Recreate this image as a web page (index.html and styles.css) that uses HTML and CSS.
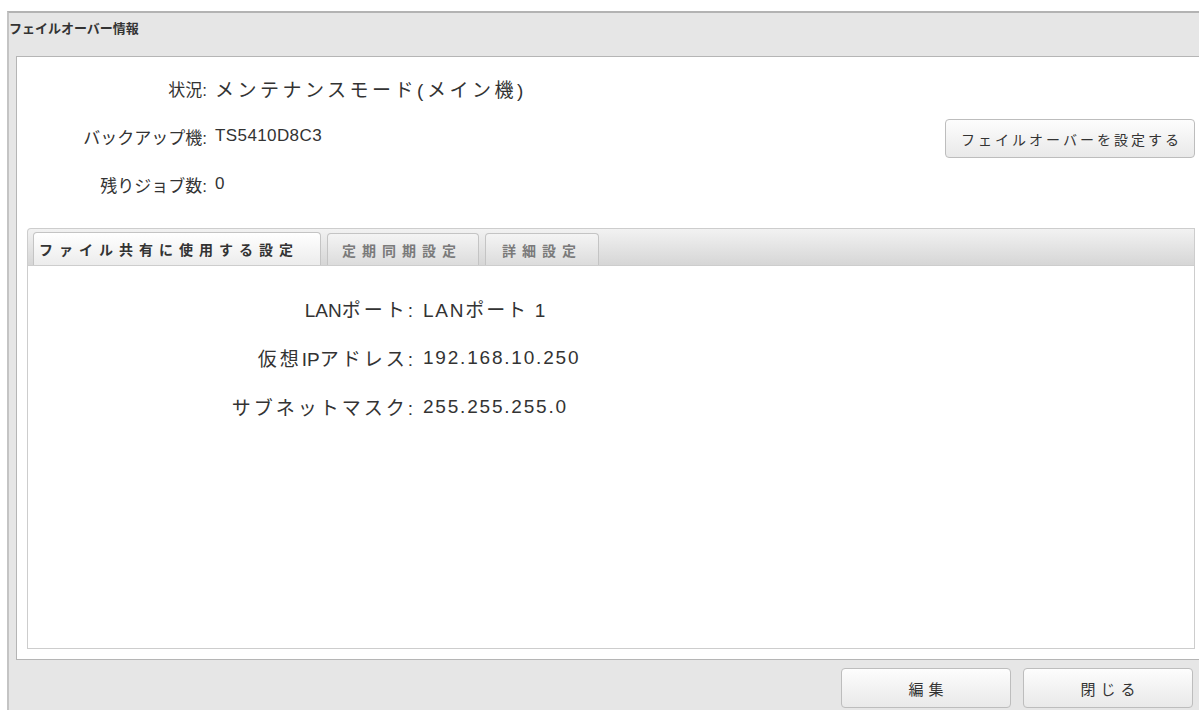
FILE: index.html
```html
<!DOCTYPE html>
<html lang="ja">
<head>
<meta charset="utf-8">
<title>フェイルオーバー情報</title>
<link rel="stylesheet" href="styles.css">
</head>
<body>
<div class="panel">
  <div class="panel-title">フェイルオーバー情報</div>
  <div class="panel-body">
    <div class="summary">
      <span class="label">状況:</span>
      <span class="value value-jp">メンテナンスモード(メイン機)</span>
      <span></span>
      <span class="label">バックアップ機:</span>
      <span class="value">TS5410D8C3</span>
      <button class="btn btn-failover">フェイルオーバーを設定する</button>
      <span class="label">残りジョブ数:</span>
      <span class="value">0</span>
      <span></span>
    </div>
    <div class="tabs">
      <div class="tab-bar">
        <div class="tab tab-1 active">ファイル共有に使用する設定</div>
        <div class="tab tab-2">定期同期設定</div>
        <div class="tab tab-3">詳細設定</div>
      </div>
      <div class="tab-panel">
        <div class="details">
          <span class="label"><span class="en">LAN</span>ポート:</span>
          <span class="value">LANポート 1</span>
          <span class="label">仮想<span class="en">IP</span>アドレス:</span>
          <span class="value">192.168.10.250</span>
          <span class="label">サブネットマスク:</span>
          <span class="value">255.255.255.0</span>
        </div>
      </div>
    </div>
  </div>
  <div class="panel-footer">
    <button class="btn btn-footer">編集</button>
    <button class="btn btn-footer">閉じる</button>
  </div>
</div>
</body>
</html>
```

FILE: styles.css
```css
html, body {
  margin: 0;
  padding: 0;
  background: #ffffff;
  overflow: hidden;
}

body {
  font-family: "Liberation Sans", "Noto Sans CJK JP", sans-serif;
  color: #333333;
  height: 710px;
}

.panel {
  margin: 11px 0 0 7px;
  width: 1190px;
  height: 720px;
  background: #e6e6e6;
  border-top: 2px solid #b3b3b3;
  border-left: 2px solid #c4c4c4;
  display: flex;
  flex-direction: column;
}

.panel-title {
  height: 30px;
  line-height: 30px;
  margin-bottom: 13px;
  font-family: "Noto Sans CJK JP", sans-serif;
  font-size: 13px;
  font-weight: bold;
  color: #333;
}

.panel-body {
  margin-left: 7px;
  background: #ffffff;
  border-top: 1px solid #b5b5b5;
  border-left: 1px solid #b5b5b5;
  border-bottom: 1px solid #b5b5b5;
  padding: 7px 4px 10px 10px;
}

.summary {
  display: grid;
  grid-template-columns: 190px auto 1fr;
  grid-auto-rows: 48px;
  column-gap: 8px;
  align-items: center;
  margin-left: -10px;
  font-size: 17px;
  letter-spacing: 0.4px;
}

.label {
  text-align: right;
  justify-self: end;
  white-space: nowrap;
}

.summary .label {
  letter-spacing: 0;
}

.value {
  white-space: nowrap;
}

.value-jp {
  font-size: 19px;
  letter-spacing: 3.5px;
}

.btn {
  font-family: "Noto Sans CJK JP", sans-serif;
  color: #333;
  background: linear-gradient(#fdfdfd, #e9e9e9);
  border: 1px solid #bdbdbd;
  border-radius: 4px;
  padding: 0;
  cursor: pointer;
}

.btn-failover {
  justify-self: end;
  width: 250px;
  height: 39px;
  font-size: 14px;
  letter-spacing: 3px;
  padding-left: 3px;
  margin-top: 5px;
}

.tabs {
  margin-top: 20px;
}

.tab-bar {
  display: flex;
  align-items: flex-end;
  gap: 6px;
  height: 36px;
  padding-left: 5px;
  background: linear-gradient(#f2f2f2, #d6d6d6);
  border: 1px solid #cdcdcd;
  border-bottom: none;
  border-radius: 4px 0 0 0;
}

.tab {
  height: 32px;
  line-height: 32px;
  box-sizing: border-box;
  font-family: "Noto Sans CJK JP", sans-serif;
  font-size: 14px;
  font-weight: bold;
  letter-spacing: 6px;
  color: #7a7a7a;
  background: linear-gradient(#f4f4f4, #dcdcdc);
  border: 1px solid #c4c4c4;
  border-bottom: none;
  border-radius: 4px 4px 0 0;
  white-space: nowrap;
}

.tab.active {
  color: #333;
  background: linear-gradient(#ffffff, #ececec);
  height: 33px;
}

.tab-1 { width: 288px; padding-left: 5px; }
.tab-2 { width: 152px; padding-left: 14px; }
.tab-3 { width: 114px; padding-left: 16px; }

.tab-panel {
  height: 384px;
  box-sizing: border-box;
  border: 1px solid #cdcdcd;
  background: #ffffff;
  padding-top: 18px;
}

.details {
  display: grid;
  grid-template-columns: 388px auto;
  grid-auto-rows: 49px;
  column-gap: 7px;
  align-items: center;
  font-size: 19px;
  letter-spacing: 1.8px;
}

.details .label {
  letter-spacing: 3px;
}

.details .label .en {
  letter-spacing: 0;
}

.panel-footer {
  display: flex;
  justify-content: flex-end;
  gap: 12px;
  padding: 8px 6px 0 0;
}

.btn-footer {
  width: 170px;
  height: 40px;
  font-size: 15px;
  letter-spacing: 5px;
  padding-left: 5px;
}
```
